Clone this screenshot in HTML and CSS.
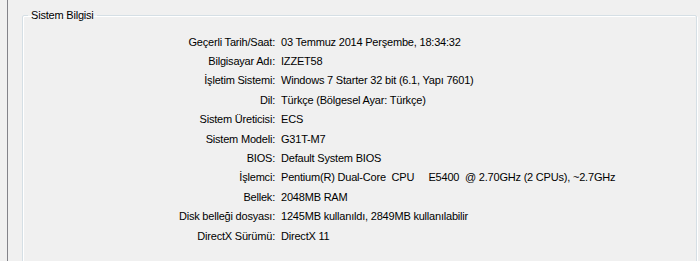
FILE: index.html
```html
<!DOCTYPE html>
<html lang="tr">
<head>
  <meta charset="UTF-8" />
  <title>Sistem Bilgisi</title>
  <link rel="stylesheet" href="styles.css">
</head>
<body>
  <div class="pencere">
    <div class="kenar"></div>
    <div class="sayfa">
      <fieldset class="grup">
        <legend>Sistem Bilgisi</legend>
        <div class="bilgi">
          <span class="etiket">Geçerli Tarih/Saat:</span><span class="deger">03 Temmuz 2014 Perşembe, 18:34:32</span>
          <span class="etiket">Bilgisayar Adı:</span><span class="deger">IZZET58</span>
          <span class="etiket">İşletim Sistemi:</span><span class="deger">Windows 7 Starter 32 bit (6.1, Yapı 7601)</span>
          <span class="etiket">Dil:</span><span class="deger">Türkçe (Bölgesel Ayar: Türkçe)</span>
          <span class="etiket">Sistem Üreticisi:</span><span class="deger">ECS</span>
          <span class="etiket">Sistem Modeli:</span><span class="deger">G31T-M7</span>
          <span class="etiket">BIOS:</span><span class="deger">Default System BIOS</span>
          <span class="etiket">İşlemci:</span><span class="deger">Pentium(R) Dual-Core  CPU     E5400  @ 2.70GHz (2 CPUs), ~2.7GHz</span>
          <span class="etiket">Bellek:</span><span class="deger">2048MB RAM</span>
          <span class="etiket">Disk belleği dosyası:</span><span class="deger">1245MB kullanıldı, 2849MB kullanılabilir</span>
          <span class="etiket">DirectX Sürümü:</span><span class="deger">DirectX 11</span>
        </div>
      </fieldset>
    </div>
  </div>
</body>
</html>
```

FILE: styles.css
```css
html, body {
  margin: 0;
  height: 100%;
  overflow: hidden;
}

body {
  font-family: "Liberation Sans", Arial, sans-serif;
  font-size: 11px;
  letter-spacing: -0.2px;
  color: #000;
  background-color: #f0f0f0;
}

.pencere {
  display: flex;
  height: 100%;
}

.kenar {
  width: 7px;
  border-right: 1px solid #838389;
}

.sayfa {
  flex: 1;
  padding: 9px 3px 0 14px;
}

.grup {
  margin: 0;
  padding: 10px 0 30px 0;
  border: 1px solid #d5dfe5;
  border-radius: 2px;
  box-shadow: inset 1px 1px 0 #fff, 1px 1px 0 #fff;
}

.grup legend {
  margin-left: 5px;
  padding: 0 3px;
  line-height: 13px;
}

.bilgi {
  display: grid;
  grid-template-columns: 252px 1fr;
  grid-auto-rows: 19.4px;
  column-gap: 6px;
  align-items: center;
}

.etiket {
  text-align: right;
  white-space: nowrap;
}

.deger {
  white-space: pre;
}
```
